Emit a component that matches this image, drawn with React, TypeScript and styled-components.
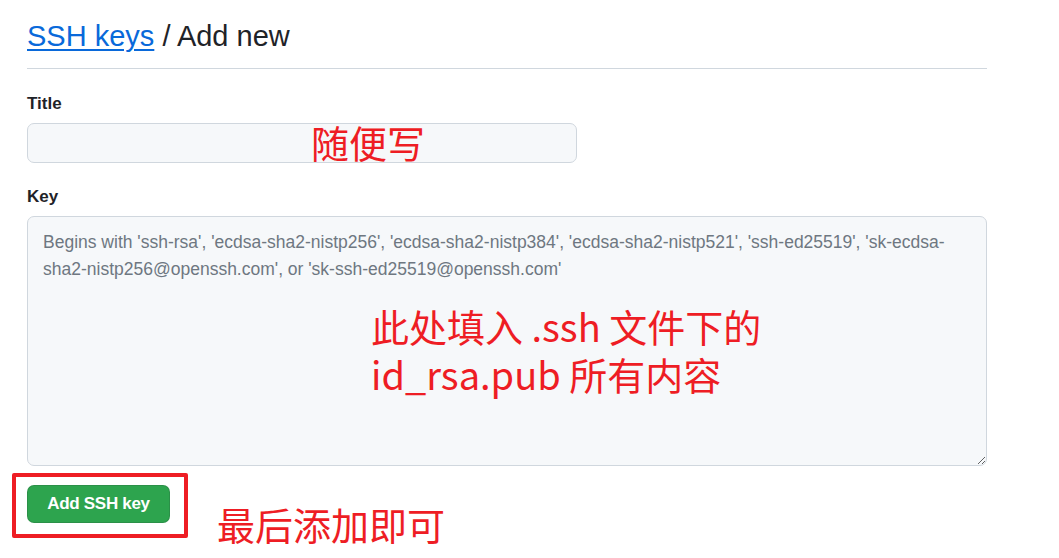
import React from "react";
import styled, { createGlobalStyle } from "styled-components";

const GlobalStyle = createGlobalStyle`
  html, body { margin: 0; padding: 0; background: #ffffff; }
  body { font-family: "Liberation Sans", Arial, sans-serif; color: #1f2328; }
  * { box-sizing: border-box; }
`;

const Page = styled.div`
  position: relative;
  width: 1059px;
  height: 558px;
  overflow: hidden;
  padding: 14px 72px 0 27px;
`;

const Header = styled.h2`
  margin: 0;
  padding-bottom: 9px;
  font-size: 29px;
  line-height: 45px;
  font-weight: 400;
  border-bottom: 1px solid #d0d7de;
  color: #1f2328;
`;

const Crumb = styled.a`
  color: #0969da;
  text-decoration: underline;
  text-underline-offset: 3px;
  text-decoration-thickness: 2px;
`;

const Form = styled.form`
  display: flex;
  flex-direction: column;
  align-items: flex-start;
`;

const Label = styled.label<{ $top: number }>`
  margin-top: ${(p) => p.$top}px;
  margin-bottom: 6px;
  font-size: 17px;
  line-height: 26px;
  font-weight: 600;
  color: #1f2328;
`;

const TextInput = styled.input`
  width: 550px;
  height: 40px;
  border: 1px solid #d0d7de;
  border-radius: 7px;
  background: #f6f8fa;
  padding: 0 15px;
  font: inherit;
  font-size: 17.5px;
  outline: none;
`;

const KeyArea = styled.textarea`
  width: 960px;
  height: 250px;
  border: 1px solid #d0d7de;
  border-radius: 7px;
  background: #f6f8fa;
  padding: 12px 15px;
  font-family: "Liberation Sans", Arial, sans-serif;
  font-size: 17.5px;
  line-height: 27px;
  color: #1f2328;
  outline: none;
  resize: vertical;
  &::placeholder {
    color: #6e7781;
  }
`;

const SubmitButton = styled.button`
  margin-top: 19px;
  width: 143px;
  height: 38px;
  border: 1px solid rgba(31, 35, 40, 0.15);
  border-radius: 7px;
  background: #2da44e;
  color: #ffffff;
  font-family: "Liberation Sans", Arial, sans-serif;
  font-size: 17px;
  font-weight: 700;
  letter-spacing: -0.3px;
  cursor: pointer;
`;

const Note = styled.div<{ $x: number; $y: number }>`
  position: absolute;
  left: ${(p) => p.$x}px;
  top: ${(p) => p.$y}px;
  font-family: "Microsoft YaHei", "Noto Sans CJK SC", sans-serif;
  font-size: 38px;
  line-height: 48px;
  color: #ee1d24;
  white-space: nowrap;
  pointer-events: none;
`;

const Highlight = styled.div`
  position: absolute;
  left: 12px;
  top: 473px;
  width: 176px;
  height: 65px;
  border: 4px solid #ee1d24;
  border-radius: 2px;
  pointer-events: none;
`;

export default function App() {
  return (
    <>
      <GlobalStyle />
      <Page>
        <Header>
          <Crumb href="#">SSH keys</Crumb> / Add new
        </Header>
        <Form onSubmit={(e) => e.preventDefault()}>
          <Label $top={22} htmlFor="title">Title</Label>
          <TextInput id="title" type="text" />
          <Label $top={21} htmlFor="key">Key</Label>
          <KeyArea
            id="key"
            placeholder="Begins with 'ssh-rsa', 'ecdsa-sha2-nistp256', 'ecdsa-sha2-nistp384', 'ecdsa-sha2-nistp521', 'ssh-ed25519', 'sk-ecdsa-sha2-nistp256@openssh.com', or 'sk-ssh-ed25519@openssh.com'"
          />
          <SubmitButton type="submit">Add SSH key</SubmitButton>
        </Form>
        <Note $x={311} $y={118}>随便写</Note>
        <Note $x={371} $y={302}>
          此处填入 .ssh 文件下的
          <br />
          id_rsa.pub 所有内容
        </Note>
        <Note $x={217} $y={500}>最后添加即可</Note>
        <Highlight />
      </Page>
    </>
  );
}
